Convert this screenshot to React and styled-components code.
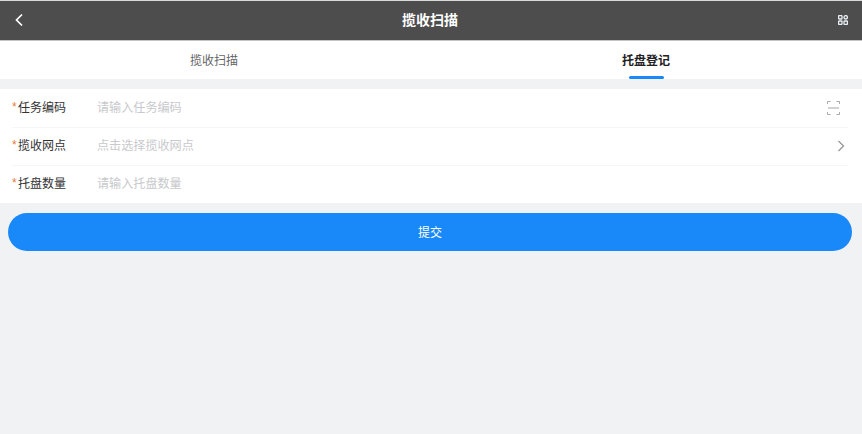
import styled, { createGlobalStyle } from "styled-components";

const GlobalStyle = createGlobalStyle`
  html, body {
    margin: 0;
    padding: 0;
    height: 100%;
    background: #f1f2f4;
    font-family: "Liberation Sans", "Noto Sans CJK SC", sans-serif;
  }
  * {
    box-sizing: border-box;
  }
`;

const Page = styled.div`
  display: flex;
  flex-direction: column;
  width: 862px;
  height: 434px;
  overflow: hidden;
  background: #f1f2f4;
`;

const NavBar = styled.header`
  display: flex;
  align-items: center;
  justify-content: space-between;
  height: 41px;
  padding: 0 14px 2px 14px;
  background: #4d4d4d;
  border-top: 1px solid #d9d9d9;
  border-bottom: 1px solid #c4c4c4;
`;

const NavTitle = styled.h1`
  margin: 0;
  padding: 0 2px 2px 0;
  font-size: 14px;
  font-weight: 700;
  color: #fff;
`;

const Tabs = styled.nav`
  display: flex;
  height: 38px;
  background: #fff;
`;

const Tab = styled.div`
  position: relative;
  flex: 1;
  display: flex;
  align-items: center;
  justify-content: center;
  padding: 0 ${(p) => (p.$active ? "2px" : "4px")} 1px 0;
  font-size: 12px;
  font-weight: ${(p) => (p.$active ? 700 : 400)};
  color: ${(p) => (p.$active ? "#222" : "#646566")};

  &::after {
    content: "";
    display: ${(p) => (p.$active ? "block" : "none")};
    position: absolute;
    bottom: 0;
    left: 50%;
    width: 35px;
    height: 3px;
    margin-left: -18px;
    border-radius: 2px;
    background: #1989fa;
  }
`;

const Form = styled.section`
  margin-top: 10px;
  background: #fff;
`;

const Row = styled.div`
  position: relative;
  display: flex;
  align-items: center;
  height: 38px;
  padding: 0 12px;

  & + &::before {
    content: "";
    position: absolute;
    top: 0;
    left: 12px;
    right: 14px;
    height: 1px;
    background: #f6f6f7;
  }
`;

const Star = styled.span`
  width: 6px;
  margin-bottom: 3px;
  font-size: 12px;
  color: #ee7a3a;
`;

const Label = styled.label`
  width: 79px;
  margin-bottom: 3px;
  font-size: 12px;
  color: #323233;
`;

const Placeholder = styled.span`
  flex: 1;
  margin-bottom: 3px;
  font-size: 12.1px;
  color: #c8c9cc;
`;

const IconSlot = styled.span`
  display: flex;
  margin-right: ${(p) => p.$inset}px;
`;

const Submit = styled.button`
  display: block;
  height: 38px;
  margin: 10px 10px 0 8px;
  padding: 0 0 1px;
  border: 0;
  border-radius: 19px;
  background: #1989fa;
  color: #fff;
  font-family: inherit;
  font-size: 12px;
`;

const BackIcon = () => (
  <svg width="10" height="14" viewBox="0 0 10 14" fill="none">
    <path d="M8 1.500 2.500 7 8 12.500" stroke="#fff" strokeWidth="1.700" />
  </svg>
);

const GridIcon = () => (
  <svg width="10" height="10" viewBox="0 0 10 10" fill="none" stroke="#e8eff3" strokeWidth="1.300">
    <rect x="0.600" y="0.600" width="3.400" height="3.400" rx="0.600" />
    <rect x="6" y="0.600" width="3.400" height="3.400" rx="1.700" />
    <rect x="0.600" y="6" width="3.400" height="3.400" rx="0.600" />
    <rect x="6" y="6" width="3.400" height="3.400" rx="0.600" />
  </svg>
);

const ScanIcon = () => (
  <svg width="13" height="14" viewBox="0 0 13 14" fill="none" stroke="#a8a9ac" strokeWidth="1">
    <path d="M.5 3V.5h3M9.500.5h3V3M.5 11v2.500h3M9.500 13.500h3V11" />
    <path d="M1 7h11" stroke="#d2d2d4" strokeWidth="2" />
  </svg>
);

const ArrowIcon = () => (
  <svg width="8" height="12" viewBox="0 0 8 12" fill="none">
    <path d="M1.500 1 6.500 6l-5 5" stroke="#969799" strokeWidth="1.300" />
  </svg>
);

const fields = [
  { label: "任务编码", placeholder: "请输入任务编码", icon: <ScanIcon />, inset: 10 },
  { label: "揽收网点", placeholder: "点击选择揽收网点", icon: <ArrowIcon />, inset: 5 },
  { label: "托盘数量", placeholder: "请输入托盘数量" },
];

export default function App() {
  return (
    <Page>
      <GlobalStyle />
      <NavBar>
        <BackIcon />
        <NavTitle>揽收扫描</NavTitle>
        <GridIcon />
      </NavBar>
      <Tabs>
        <Tab>揽收扫描</Tab>
        <Tab $active>托盘登记</Tab>
      </Tabs>
      <Form>
        {fields.map((f) => (
          <Row key={f.label}>
            <Star>*</Star>
            <Label>{f.label}</Label>
            <Placeholder>{f.placeholder}</Placeholder>
            {f.icon && <IconSlot $inset={f.inset}>{f.icon}</IconSlot>}
          </Row>
        ))}
      </Form>
      <Submit>提交</Submit>
    </Page>
  );
}
